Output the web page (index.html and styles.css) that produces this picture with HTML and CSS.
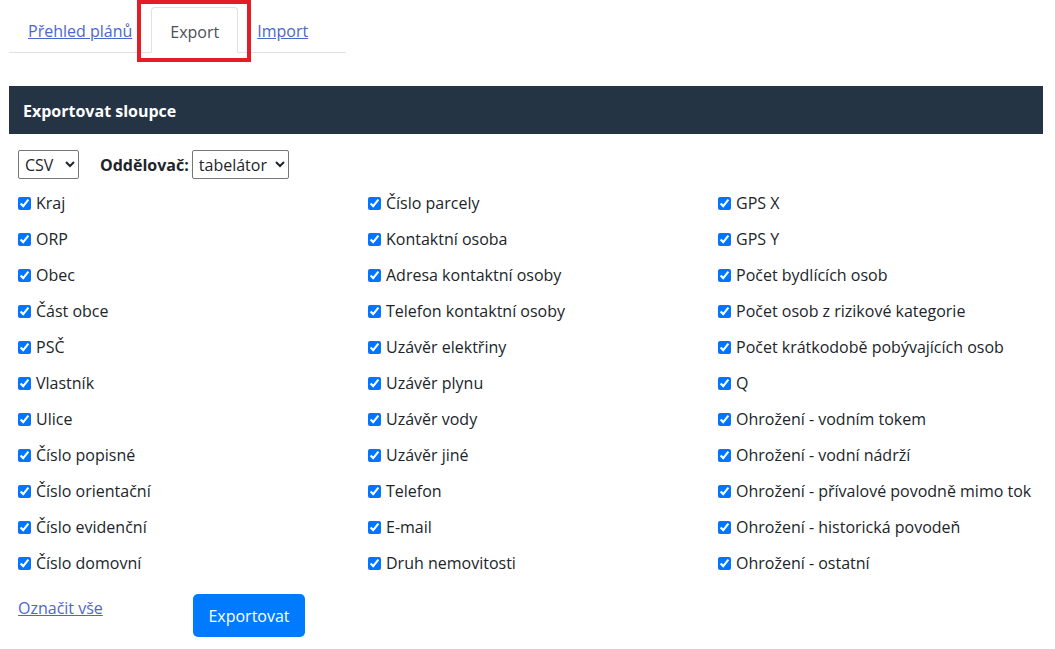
FILE: index.html
```html
<!DOCTYPE html>
<html lang="cs">
<head>
<meta charset="utf-8">
<title>Export</title>
<link rel="stylesheet" href="styles.css">
</head>
<body>
<div class="tabs-wrap">
  <nav class="tabs">
    <a class="tab-link" href="#">Přehled plánů</a>
    <span class="tab-active">Export</span>
    <a class="tab-link" href="#">Import</a>
  </nav>
  <div class="highlight"></div>
</div>

<div class="panel-head">Exportovat sloupce</div>

<form class="export-form">
  <div class="options">
    <select class="sel sel-format"><option>CSV</option></select>
    <label class="sep-label">Oddělovač:</label>
    <select class="sel sel-sep"><option>tabelátor</option></select>
  </div>

  <div class="cols">
    <label class="item"><input type="checkbox" checked>Kraj</label>
    <label class="item"><input type="checkbox" checked>ORP</label>
    <label class="item"><input type="checkbox" checked>Obec</label>
    <label class="item"><input type="checkbox" checked>Část obce</label>
    <label class="item"><input type="checkbox" checked>PSČ</label>
    <label class="item"><input type="checkbox" checked>Vlastník</label>
    <label class="item"><input type="checkbox" checked>Ulice</label>
    <label class="item"><input type="checkbox" checked>Číslo popisné</label>
    <label class="item"><input type="checkbox" checked>Číslo orientační</label>
    <label class="item"><input type="checkbox" checked>Číslo evidenční</label>
    <label class="item"><input type="checkbox" checked>Číslo domovní</label>

    <label class="item"><input type="checkbox" checked>Číslo parcely</label>
    <label class="item"><input type="checkbox" checked>Kontaktní osoba</label>
    <label class="item"><input type="checkbox" checked>Adresa kontaktní osoby</label>
    <label class="item"><input type="checkbox" checked>Telefon kontaktní osoby</label>
    <label class="item"><input type="checkbox" checked>Uzávěr elektřiny</label>
    <label class="item"><input type="checkbox" checked>Uzávěr plynu</label>
    <label class="item"><input type="checkbox" checked>Uzávěr vody</label>
    <label class="item"><input type="checkbox" checked>Uzávěr jiné</label>
    <label class="item"><input type="checkbox" checked>Telefon</label>
    <label class="item"><input type="checkbox" checked>E-mail</label>
    <label class="item"><input type="checkbox" checked>Druh nemovitosti</label>

    <label class="item"><input type="checkbox" checked>GPS X</label>
    <label class="item"><input type="checkbox" checked>GPS Y</label>
    <label class="item"><input type="checkbox" checked>Počet bydlících osob</label>
    <label class="item"><input type="checkbox" checked>Počet osob z rizikové kategorie</label>
    <label class="item"><input type="checkbox" checked>Počet krátkodobě pobývajících osob</label>
    <label class="item"><input type="checkbox" checked>Q</label>
    <label class="item"><input type="checkbox" checked>Ohrožení - vodním tokem</label>
    <label class="item"><input type="checkbox" checked>Ohrožení - vodní nádrží</label>
    <label class="item"><input type="checkbox" checked>Ohrožení - přívalové povodně mimo tok</label>
    <label class="item"><input type="checkbox" checked>Ohrožení - historická povodeň</label>
    <label class="item"><input type="checkbox" checked>Ohrožení - ostatní</label>
  </div>

  <div class="actions">
    <div class="select-all"><a href="#">Označit vše</a></div>
    <button type="button" class="btn">Exportovat</button>
  </div>
</form>
</body>
</html>
```

FILE: styles.css
```css
* { box-sizing: border-box; }

body {
  margin: 0;
  font-family: "Open Sans", "Noto Sans", sans-serif;
  font-size: 16px;
  line-height: 24px;
  color: #212529;
  background: #fff;
}

.tabs-wrap {
  position: relative;
  padding-top: 7px;
}

.tabs {
  display: flex;
  align-items: flex-end;
  margin-left: 9px;
  width: 337px;
  height: 46px;
  border-bottom: 1px solid #dee2e6;
}

.tab-link {
  display: block;
  padding: 0 19px 0 19px;
  height: 45px;
  line-height: 49px;
  color: #4d66cc;
  text-decoration: underline;
}

.tab-active {
  display: block;
  height: 46px;
  margin-bottom: -1px;
  padding: 0 18px;
  line-height: 49px;
  color: #495057;
  background: #fff;
  border: 1px solid #dee2e6;
  border-bottom-color: #fff;
  border-radius: 4px 4px 0 0;
}

.highlight {
  position: absolute;
  left: 137px;
  top: 0;
  width: 114px;
  height: 62px;
  border: 4px solid #e31c25;
}

.panel-head {
  margin: 33px 12px 0 9px;
  height: 48px;
  padding-left: 14px;
  padding-top: 1px;
  display: flex;
  align-items: center;
  background: #243445;
  color: #fff;
  font-weight: 700;
}

.export-form {
  padding-left: 18px;
}

.options {
  display: flex;
  align-items: center;
  margin-top: 16px;
  height: 29px;
}

.sel {
  height: 29px;
  font-family: inherit;
  font-size: 16px;
  color: #212529;
  background: #fff;
  border: 1px solid #767676;
  border-radius: 2px;
  padding: 1px 2px 0;
}

.sel-format { width: 61px; }
.sel-sep { width: 97px; }

.sep-label {
  font-weight: 700;
  margin: 1px 3px 0 21px;
}

.cols {
  margin-top: 6px;
  display: grid;
  grid-auto-flow: column;
  grid-template-rows: repeat(11, 36px);
  grid-template-columns: repeat(3, 350px);
}

.item {
  display: flex;
  align-items: center;
  white-space: nowrap;
}

.item input {
  width: 13px;
  height: 13px;
  margin: 0 5px 0 0;
}

.actions {
  display: flex;
  align-items: flex-start;
  margin-top: 13px;
}

.select-all {
  width: 175px;
  padding-top: 2px;
}

.select-all a {
  color: #4d66cc;
  text-decoration: underline;
}

.btn {
  width: 112px;
  height: 43px;
  border: none;
  border-radius: 5px;
  background: #007bff;
  color: #fff;
  font-family: inherit;
  font-size: 16px;
  padding: 0;
}
```
